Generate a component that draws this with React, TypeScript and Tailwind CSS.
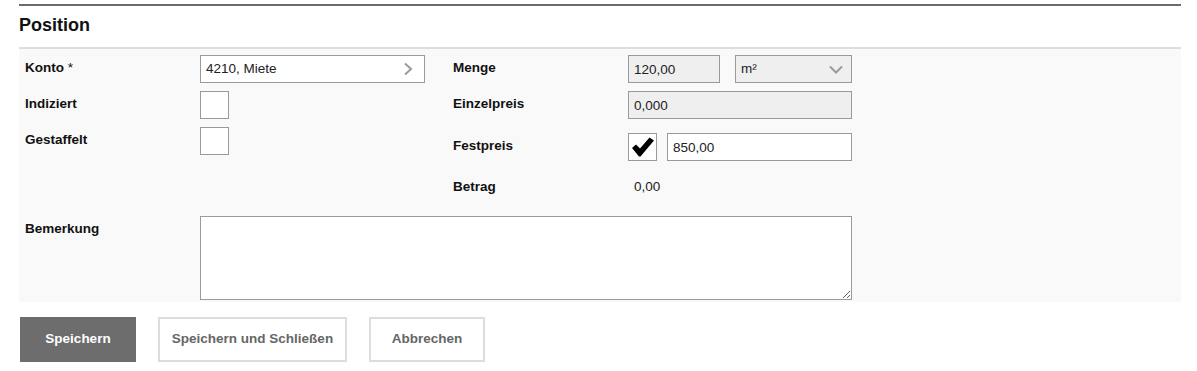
import React from "react";

const font = { fontFamily: '"Liberation Sans", Arial, sans-serif' };

function ChevronRight() {
  return (
    <svg width="10" height="14" viewBox="0 0 10 14" className="shrink-0">
      <polyline
        points="2,1.5 8,7 2,12.5"
        fill="none"
        stroke="#9a9a9a"
        strokeWidth="2"
      />
    </svg>
  );
}

function ChevronDown() {
  return (
    <svg width="14" height="9" viewBox="0 0 14 9" className="shrink-0">
      <polyline
        points="1,1.5 7,7.5 13,1.5"
        fill="none"
        stroke="#9a9a9a"
        strokeWidth="2"
      />
    </svg>
  );
}

function CheckMark() {
  return (
    <svg width="22" height="20" viewBox="0 0 22 20">
      <path
        d="M0 11 L4 7.5 L8 11.5 L17.5 0.5 L22 3.5 L8.5 19.5 L7 19.5 Z"
        fill="#000"
      />
    </svg>
  );
}

interface LabelProps {
  children: React.ReactNode;
  className?: string;
}

function Label({ children, className = "" }: LabelProps) {
  return (
    <div
      className={`w-[175px] shrink-0 pt-[5px] text-[13.5px] leading-[15px] font-bold text-[#111] ${className}`}
    >
      {children}
    </div>
  );
}

function Checkbox({ checked }: { checked?: boolean }) {
  return (
    <div className="w-[29px] h-[28px] border border-[#9a9a9a] bg-white flex items-center justify-center">
      {checked && <CheckMark />}
    </div>
  );
}

export default function App() {
  return (
    <div className="w-[1197px] h-[371px] bg-white pl-[19px] pr-[16px]" style={font}>
      <div className="mt-[4px] border-t-2 border-[#6b6b6b] border-b-2 border-b-[#dddddd] pt-[9px] pb-[11px]">
        <h2 className="text-[18px] leading-[21px] font-bold text-[#111]">Position</h2>
      </div>

      <div className="bg-[#f9f9f9] pl-[6px] pt-[6px] h-[253px]">
        <div className="flex">
          <div className="w-[428px] flex flex-col gap-[8px]">
            <div className="flex h-[28px]">
              <Label>
                Konto <span className="font-normal">*</span>
              </Label>
              <div className="w-[225px] h-[28px] border border-[#9a9a9a] bg-white flex items-center pl-[5px] pr-[11px]">
                <input
                  readOnly
                  value="4210, Miete"
                  className="flex-1 min-w-0 bg-transparent outline-none text-[13.5px] text-[#222]"
                />
                <ChevronRight />
              </div>
            </div>
            <div className="flex h-[28px]">
              <Label>Indiziert</Label>
              <Checkbox />
            </div>
            <div className="flex h-[28px]">
              <Label>Gestaffelt</Label>
              <Checkbox />
            </div>
          </div>

          <div className="flex flex-col">
            <div className="flex h-[28px]">
              <Label>Menge</Label>
              <input
                readOnly
                value="120,00"
                className="w-[92px] h-[28px] border border-[#9a9a9a] bg-[#efefef] px-[5px] text-[13.5px] text-[#222] outline-none"
              />
              <div className="ml-[15px] w-[117px] h-[28px] border border-[#9a9a9a] bg-[#efefef] flex items-center justify-between pl-[5px] pr-[8px] text-[13.5px] text-[#222]">
                <span>m²</span>
                <ChevronDown />
              </div>
            </div>
            <div className="flex h-[28px] mt-[8px]">
              <Label>Einzelpreis</Label>
              <input
                readOnly
                value="0,000"
                className="w-[224px] h-[28px] border border-[#9a9a9a] bg-[#efefef] px-[5px] text-[13.5px] text-[#222] outline-none"
              />
            </div>
            <div className="flex h-[28px] mt-[14px]">
              <Label className="pt-[2px]">Festpreis</Label>
              <Checkbox checked />
              <input
                readOnly
                value="850,00"
                className="ml-[10px] w-[185px] h-[28px] border border-[#9a9a9a] bg-white px-[5px] text-[13.5px] text-[#222] outline-none"
              />
            </div>
            <div className="flex h-[28px] mt-[13px]">
              <Label>Betrag</Label>
              <div className="pt-[5px] pl-[6px] text-[13.5px] leading-[15px] text-[#222]">0,00</div>
            </div>
          </div>
        </div>

        <div className="flex mt-[14px]">
          <Label>Bemerkung</Label>
          <textarea className="block w-[652px] h-[84px] border border-[#9a9a9a] bg-white outline-none text-[13.5px] p-[4px]" />
        </div>
      </div>

      <div className="flex gap-[22px] mt-[15px] pl-[1px]">
        <button className="w-[116px] h-[45px] bg-[#6d6d6d] text-white text-[13.5px] font-bold">
          Speichern
        </button>
        <button className="w-[189px] h-[45px] bg-white border-2 border-[#dddddd] text-[#666] text-[13.5px] font-bold">
          Speichern und Schließen
        </button>
        <button className="w-[116px] h-[45px] bg-white border-2 border-[#dddddd] text-[#666] text-[13.5px] font-bold">
          Abbrechen
        </button>
      </div>
    </div>
  );
}
